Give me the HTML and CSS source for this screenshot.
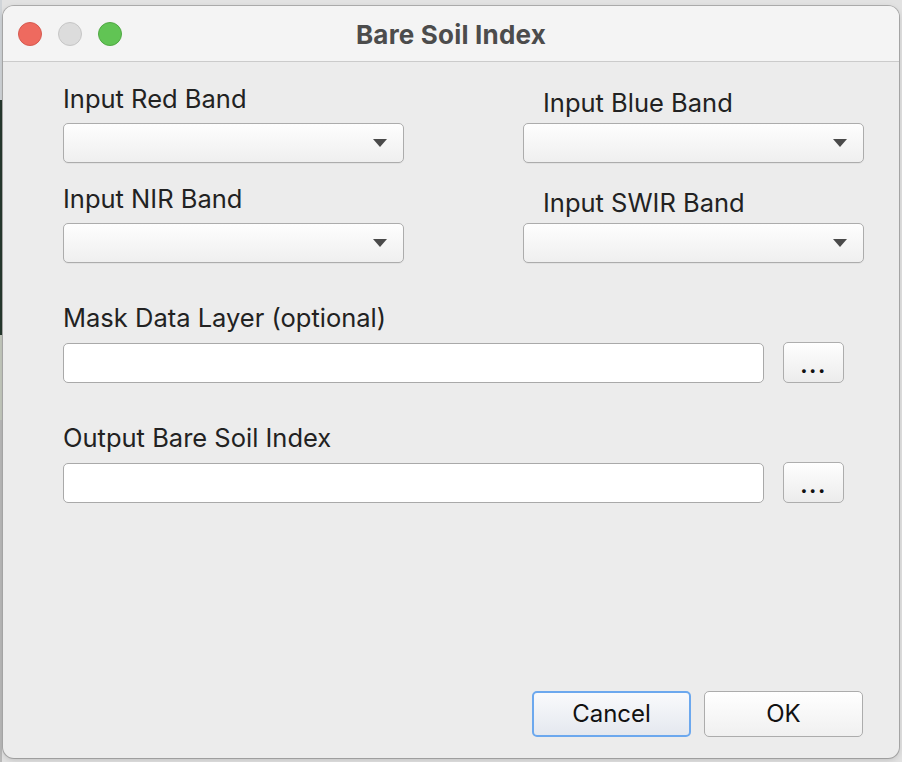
FILE: index.html
```html
<!DOCTYPE html>
<html>
<head>
<meta charset="utf-8">
<link rel="stylesheet" href="styles.css">
</head>
<body>
<div class="window">
  <div class="titlebar">
    <div class="lights">
      <span class="light red"></span>
      <span class="light gray"></span>
      <span class="light green"></span>
    </div>
    <div class="title">Bare Soil Index</div>
    <div></div>
  </div>
  <div class="content">
    <div class="bands">
      <div class="field">
        <div class="label">Input Red Band</div>
        <div class="combo"><span class="arrow"></span></div>
      </div>
      <div class="field right">
        <div class="label">Input Blue Band</div>
        <div class="combo"><span class="arrow"></span></div>
      </div>
      <div class="field">
        <div class="label">Input NIR Band</div>
        <div class="combo"><span class="arrow"></span></div>
      </div>
      <div class="field right">
        <div class="label">Input SWIR Band</div>
        <div class="combo"><span class="arrow"></span></div>
      </div>
    </div>
    <div class="file-field">
      <div class="label wide">Mask Data Layer (optional)</div>
      <div class="file-row">
        <div class="text-input"></div>
        <div class="browse">...</div>
      </div>
    </div>
    <div class="file-field">
      <div class="label wide">Output Bare Soil Index</div>
      <div class="file-row">
        <div class="text-input"></div>
        <div class="browse">...</div>
      </div>
    </div>
    <div class="footer">
      <div class="btn cancel">Cancel</div>
      <div class="btn">OK</div>
    </div>
  </div>
</div>
</body>
</html>
```
FILE: styles.css
```css
html, body {
  margin: 0;
  padding: 0;
}
body {
  width: 902px;
  height: 762px;
  overflow: hidden;
  background-color: #e2e2e2;
  background-image: linear-gradient(to bottom, #d0d4d8 0, #d0d4d8 100px, #26382e 100px, #26382e 335px, #c4c9bd 335px, #c4c9bd 420px, #b9b9b9 420px);
  background-size: 2px 100%;
  background-repeat: no-repeat;
  font-family: Inter, "Liberation Sans", sans-serif;
}
.window {
  margin: 6px 0 0 3px;
  width: 896px;
  height: 752px;
  border-radius: 11px;
  background: #ececec;
  box-shadow: 0 0 0 1px rgba(0, 0, 0, 0.22), 0 2px 6px rgba(0, 0, 0, 0.15);
  display: flex;
  flex-direction: column;
  overflow: hidden;
}
.titlebar {
  height: 55px;
  background: #f4f4f4;
  border-bottom: 1px solid #cbcbcb;
  display: grid;
  grid-template-columns: 1fr auto 1fr;
  align-items: center;
}
.lights {
  display: flex;
  gap: 16px;
  padding-left: 15px;
}
.light {
  width: 22px;
  height: 22px;
  border-radius: 50%;
  border: 1px solid transparent;
}
.red { background: #ee6a5f; border-color: #d65a50; }
.gray { background: #dcdcdc; border-color: #c6c6c6; }
.green { background: #61c454; border-color: #50a843; }
.title {
  font-weight: 700;
  font-size: 26px;
  color: #4c4c4c;
  padding-top: 1px;
  letter-spacing: 0.2px;
}
.content {
  flex: 1;
  display: flex;
  flex-direction: column;
  padding: 22px 36px 21px 60px;
}
.bands {
  display: grid;
  grid-template-columns: 341px 341px;
  column-gap: 119px;
  row-gap: 21px;
}
.label {
  height: 39px;
  line-height: 30px;
  font-size: 25.5px;
  color: #222;
  white-space: nowrap;
}
.field.right .label {
  box-sizing: border-box;
  padding: 4px 0 0 20px;
}
.combo {
  box-sizing: border-box;
  height: 40px;
  border: 1px solid #acacac;
  border-radius: 5px;
  background: linear-gradient(to bottom, #fefefe, #efefef);
  display: flex;
  align-items: center;
  justify-content: flex-end;
  padding-right: 16px;
  box-shadow: 0 1px 0 rgba(0, 0, 0, 0.04);
}
.arrow {
  width: 0;
  height: 0;
  border-left: 7px solid transparent;
  border-right: 7px solid transparent;
  border-top: 8px solid #4a4a4a;
}
.file-field {
  margin-top: 40px;
}
.label.wide {
  height: 40px;
}
.file-row {
  display: flex;
  gap: 19px;
}
.text-input {
  box-sizing: border-box;
  width: 701px;
  height: 40px;
  background: #fff;
  border: 1px solid #a9a9a9;
  border-radius: 5px;
}
.browse {
  box-sizing: border-box;
  width: 61px;
  height: 41px;
  margin-top: -1px;
  border: 1px solid #adadad;
  border-radius: 5px;
  background: linear-gradient(to bottom, #fefefe, #ececec);
  text-align: center;
  font-size: 22px;
  font-weight: 700;
  line-height: 44px;
  letter-spacing: 1.5px;
  color: #111;
}
.footer {
  margin-top: auto;
  display: flex;
  justify-content: flex-end;
  gap: 13px;
}
.btn {
  box-sizing: border-box;
  width: 159px;
  height: 46px;
  border: 1px solid #acacac;
  border-radius: 5px;
  background: linear-gradient(to bottom, #ffffff, #f0f0f0);
  text-align: center;
  line-height: 44px;
  font-size: 24px;
  color: #111;
}
.btn.cancel {
  border: 2px solid #6ca8ee;
  line-height: 42px;
  background: linear-gradient(to bottom, #f9fafc, #e4e8ef);
}
```
